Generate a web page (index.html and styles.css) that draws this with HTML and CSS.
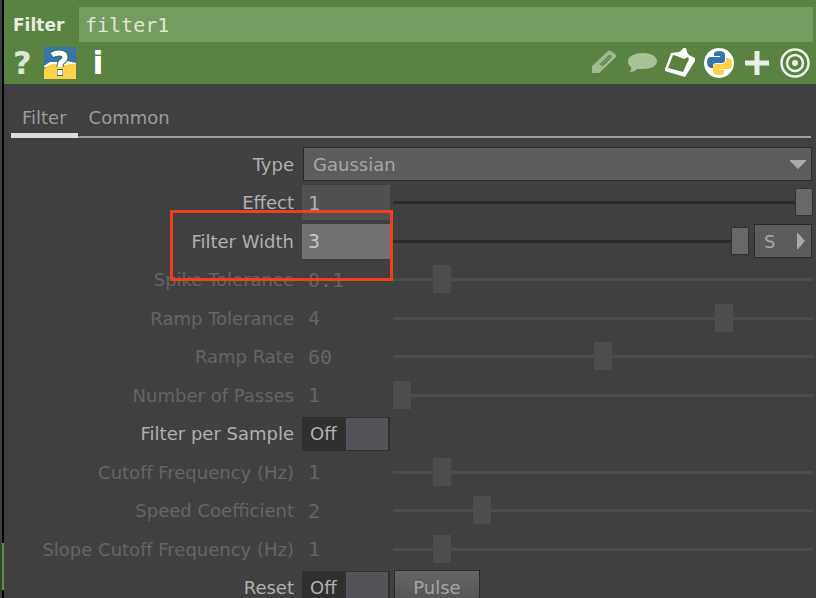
FILE: index.html
```html
<!DOCTYPE html>
<html lang="en">
<head>
<meta charset="utf-8">
<title>Filter parameters</title>
<link rel="stylesheet" href="styles.css">
</head>
<body>
<div class="edge"><span class="edge-node"></span></div>
<main class="panel">
  <header class="header">
    <div class="title-row">
      <label class="op-type" for="op-name">Filter</label>
      <input class="op-name" id="op-name" type="text" value="filter1" spellcheck="false">
    </div>
    <div class="toolbar">
      <button class="tool help" type="button" aria-label="Help">?</button>
      <button class="tool" type="button" aria-label="Python help">
        <svg width="32" height="32" viewBox="0 0 32 32"><path fill="#3973a8" d="M0 0h32v32H0z"/><path fill="#fff" d="M0 19 6 15h12l5-1 9 2v4H0z"/><path fill="#ffd04c" d="M0 22q4-5 11-5l11 1q5-2 10-1v15H0z"/><g fill="none"><path d="M8 8q3-2 7-2 6 0 6 4 0 3-3 4.500-2 1.500-2 5.500M13 25.500h6" stroke="#35703e" stroke-width="7"/><path d="M8 8q3-2 7-2 6 0 6 4 0 3-3 4.500-2 1.500-2 5.500M13.500 25.500h5" stroke="#fff" stroke-width="5"/></g></svg>
      </button>
      <button class="tool info" type="button" aria-label="Info">i</button>
      <span class="spacer"></span>
      <button class="tool" type="button" aria-label="Edit">
        <svg width="32" height="32" viewBox="0 0 32 32"><path fill="#a1bb91" d="M3 19 19 4q1-1 3 0l5 4q1 2-1 3L10 26H3z"/><path d="m11 18 9-9q2-1 2 1l-9 9" fill="none" stroke="#5a8240" stroke-width="1.500"/></svg>
      </button>
      <button class="tool" type="button" aria-label="Comment">
        <svg width="32" height="32" viewBox="0 0 32 32"><path fill="#a8c197" d="M16 6c8 0 14 3 14 8s-6 8-14 8h-6q-2 3-8 3 3-2 2-5-3-2-3-6c0-5 7-8 15-8z"/></svg>
      </button>
      <button class="tool" type="button" aria-label="Clipboard">
        <svg width="32" height="32" viewBox="0 0 32 32"><path fill="#fff" fill-rule="evenodd" d="m6 6 8-1 3-2 1-2h3l1 4 2 3 6 3v3L20 30 0 24v-2zm2 2L3 21l15 4 6-13-1-2-4 2-7-3z"/></svg>
      </button>
      <button class="tool" type="button" aria-label="Python">
        <svg width="32" height="32" viewBox="0 0 32 32"><circle cx="16" cy="16" r="15" fill="#fff"/><path fill="#3474aa" d="M11 7q0-3 5-3 6 0 6 4v5q0 3-3 3h-6q-3 0-3 3v2H8q-4-1-4-6 0-5 4-5h9v-1h-6z"/><path fill="#ffcf45" d="M21 25q0 3-5 3-6 0-6-4v-4q0-3 3-3h6q4 0 4-4v-2h2q4 1 4 6 0 5-4 5h-9v1h5z"/></svg>
      </button>
      <button class="tool" type="button" aria-label="Add">
        <svg width="32" height="32" viewBox="0 0 32 32"><path d="M16 4v24M4 16h24" stroke="#e9efe4" stroke-width="5"/></svg>
      </button>
      <button class="tool" type="button" aria-label="Target">
        <svg width="32" height="32" viewBox="0 0 32 32" fill="none" stroke="#eef3ea"><circle cx="16" cy="16" r="13.500" stroke-width="2.500"/><circle cx="16" cy="16" r="8" stroke-width="2.500"/><circle cx="16" cy="16" r="3" fill="#eef3ea" stroke="none"/></svg>
      </button>
    </div>
  </header>

  <nav class="tabs">
    <button class="tab active" type="button">Filter</button>
    <button class="tab" type="button">Common</button>
  </nav>

  <form class="params">
    <div class="row">
      <label for="type">Type</label>
      <div class="menu">
        <select id="type"><option>Gaussian</option></select>
        <svg class="menu-arrow" width="16" height="9" viewBox="0 0 16 9"><path fill="#aaa" d="M0 0h16v1L8 9 0 1z"/></svg>
      </div>
    </div>
    <div class="row">
      <label for="effect">Effect</label>
      <input class="value filled" id="effect" type="text" value="1">
      <input class="slider" type="range" aria-label="Effect slider" value="100">
    </div>
    <div class="row">
      <label for="width">Filter Width</label>
      <input class="value hot" id="width" type="text" value="3">
      <div class="slider-group">
        <input class="slider" type="range" aria-label="Filter Width slider" value="100">
        <button class="unit" type="button" aria-label="Unit S"><span>S</span><svg width="8" height="16" viewBox="0 0 8 16"><path fill="#aaa" d="M0 0h1l7 8-7 8H0z"/></svg></button>
      </div>
      <span class="callout"></span>
    </div>
    <div class="row off">
      <label for="spike">Spike Tolerance</label>
      <input class="value" id="spike" type="text" value="0.1" disabled>
      <input class="slider" type="range" aria-label="Spike Tolerance slider" value="10" disabled>
    </div>
    <div class="row off">
      <label for="ramp">Ramp Tolerance</label>
      <input class="value" id="ramp" type="text" value="4" disabled>
      <input class="slider" type="range" aria-label="Ramp Tolerance slider" value="80" disabled>
    </div>
    <div class="row off">
      <label for="rate">Ramp Rate</label>
      <input class="value" id="rate" type="text" value="60" disabled>
      <input class="slider" type="range" aria-label="Ramp Rate slider" value="50" disabled>
    </div>
    <div class="row off">
      <label for="passes">Number of Passes</label>
      <input class="value" id="passes" type="text" value="1" disabled>
      <input class="slider" type="range" aria-label="Number of Passes slider" value="0" disabled>
    </div>
    <div class="row">
      <label for="persample">Filter per Sample</label>
      <div class="toggle"><span>Off</span><input id="persample" type="checkbox"></div>
    </div>
    <div class="row off">
      <label for="cutoff">Cutoff Frequency (Hz)</label>
      <input class="value" id="cutoff" type="text" value="1" disabled>
      <input class="slider" type="range" aria-label="Cutoff Frequency slider" value="10" disabled>
    </div>
    <div class="row off">
      <label for="speed">Speed Coefficient</label>
      <input class="value" id="speed" type="text" value="2" disabled>
      <input class="slider" type="range" aria-label="Speed Coefficient slider" value="20" disabled>
    </div>
    <div class="row off">
      <label for="slope">Slope Cutoff Frequency (Hz)</label>
      <input class="value" id="slope" type="text" value="1" disabled>
      <input class="slider" type="range" aria-label="Slope Cutoff Frequency slider" value="10" disabled>
    </div>
    <div class="row">
      <label for="reset">Reset</label>
      <div class="toggle"><span>Off</span><input id="reset" type="checkbox"></div>
      <button class="pulse" type="button">Pulse</button>
    </div>
  </form>
</main>
</body>
</html>
```
FILE: styles.css
```css
* {
  box-sizing: border-box;
}

body {
  margin: 0;
  height: 100vh;
  overflow: hidden;
  display: flex;
  background: #404040;
  color: #b0b0b0;
  font-family: "DejaVu Sans", sans-serif;
  font-size: 18px;
}

button,
input,
select {
  margin: 0;
  padding: 0;
  border: 0;
  border-radius: 0;
  background: none;
  color: inherit;
  font: inherit;
}

.edge {
  flex: none;
  width: 4px;
  background: #050505;
  border-left: 2px solid #3c403c;
  display: flex;
  flex-direction: column;
  justify-content: flex-end;
  padding-bottom: 8px;
}

.edge-node {
  height: 47px;
  background: #5c963a;
}

.panel {
  flex: 1;
  min-width: 0;
}

/* Header */
.header {
  background: #5a8240;
  height: 84px;
  padding: 7px 3px 0 9px;
}

.title-row {
  display: flex;
  align-items: center;
  height: 35px;
}

.op-type {
  width: 66px;
  color: #e6ece0;
  font-weight: bold;
  font-size: 17px;
}

.op-name {
  flex: 1;
  min-width: 0;
  height: 35px;
  padding-left: 6px;
  background: #769b5e;
  color: #dde7d5;
  font-family: "DejaVu Sans Mono", monospace;
  font-size: 20px;
}

.toolbar {
  display: flex;
  align-items: center;
  gap: 6px;
  height: 42px;
  padding-right: 2px;
}

.tool {
  width: 32px;
  height: 32px;
  line-height: 32px;
  color: #fff;
  font-weight: bold;
  font-size: 32px;
}

.tool svg {
  display: block;
}

.help {
  width: 18px;
  margin-right: 7px;
  color: #dde7d5;
}

.spacer {
  flex: 1;
}

/* Tabs */
.tabs {
  display: flex;
  height: 54px;
  margin: 0 5px 0 7px;
  padding-top: 12px;
  border-bottom: 2px solid #a0a0a0;
}

.tab {
  height: 42px;
  padding: 0 11px;
  color: #9c9c9c;
}

.tab.active {
  border-bottom: 5px solid #dcdcdc;
  padding-top: 5px;
}

/* Parameter rows */
.params {
  display: grid;
  grid-auto-rows: 38px 39px;
  margin: 7px 3px 0 0;
}

.row {
  position: relative;
  display: grid;
  grid-template-columns: 290px 88px 1fr;
  column-gap: 4px;
  align-items: center;
}

.row > label {
  text-align: right;
  white-space: nowrap;
}

.row.off {
  color: #646464;
}

.menu {
  grid-column: 2 / 4;
  display: flex;
  position: relative;
  margin-left: 5px;
  margin-right: 1px;
}

.menu select {
  flex: 1;
  height: 34px;
  padding-left: 9px;
  appearance: none;
  background: #5c5c5c;
  border: 1px solid #2b2b2b;
  color: #a6a6a6;
}

.menu-arrow {
  position: absolute;
  right: 6px;
  top: 13px;
  pointer-events: none;
}

.value {
  width: 88px;
  height: 35px;
  margin-left: 4px;
  padding-left: 6px;
  font-family: "DejaVu Sans Mono", monospace;
  font-size: 20px;
}

.value.filled {
  background: #515151;
}

.value.hot {
  background: #727272;
  color: #c4c4c4;
}

.slider-group {
  display: flex;
  align-items: center;
  gap: 5px;
  padding-right: 1px;
}

.slider {
  appearance: none;
  display: block;
  flex: 1;
  width: calc(100% - 3px);
  min-width: 0;
  height: 28px;
  margin-left: 3px;
}

.slider::-webkit-slider-runnable-track {
  height: 3px;
  background: #2c2c2c;
}

.slider::-webkit-slider-thumb {
  appearance: none;
  width: 18px;
  height: 28px;
  margin-top: -13px;
  background: #686868;
  border: 1px solid #333;
}

.slider:disabled::-webkit-slider-runnable-track,
.slider:disabled::-webkit-slider-thumb {
  background: #4c4c4c;
  border-color: #4c4c4c;
}

.unit {
  display: flex;
  align-items: center;
  justify-content: space-between;
  width: 58px;
  height: 34px;
  padding: 0 6px 0 9px;
  background: #5c5c5c;
  border: 1px solid #2b2b2b;
  color: #a6a6a6;
}

.callout {
  position: absolute;
  left: 166px;
  top: -12px;
  width: 223px;
  height: 71px;
  border: 3px solid #ee3f24;
  pointer-events: none;
  z-index: 1;
}

.toggle {
  display: flex;
  align-items: center;
  justify-content: space-between;
  width: 88px;
  height: 34px;
  margin-left: 4px;
  padding: 1px 2px 1px 8px;
  background: #303030;
}

.toggle input {
  appearance: none;
  width: 42px;
  height: 32px;
  background: #54535a;
}

.pulse {
  width: 86px;
  height: 35px;
  margin-left: 4px;
  background: linear-gradient(#666, #535353);
  border: 1px solid #2b2b2b;
  color: #a6a6a6;
}
```
